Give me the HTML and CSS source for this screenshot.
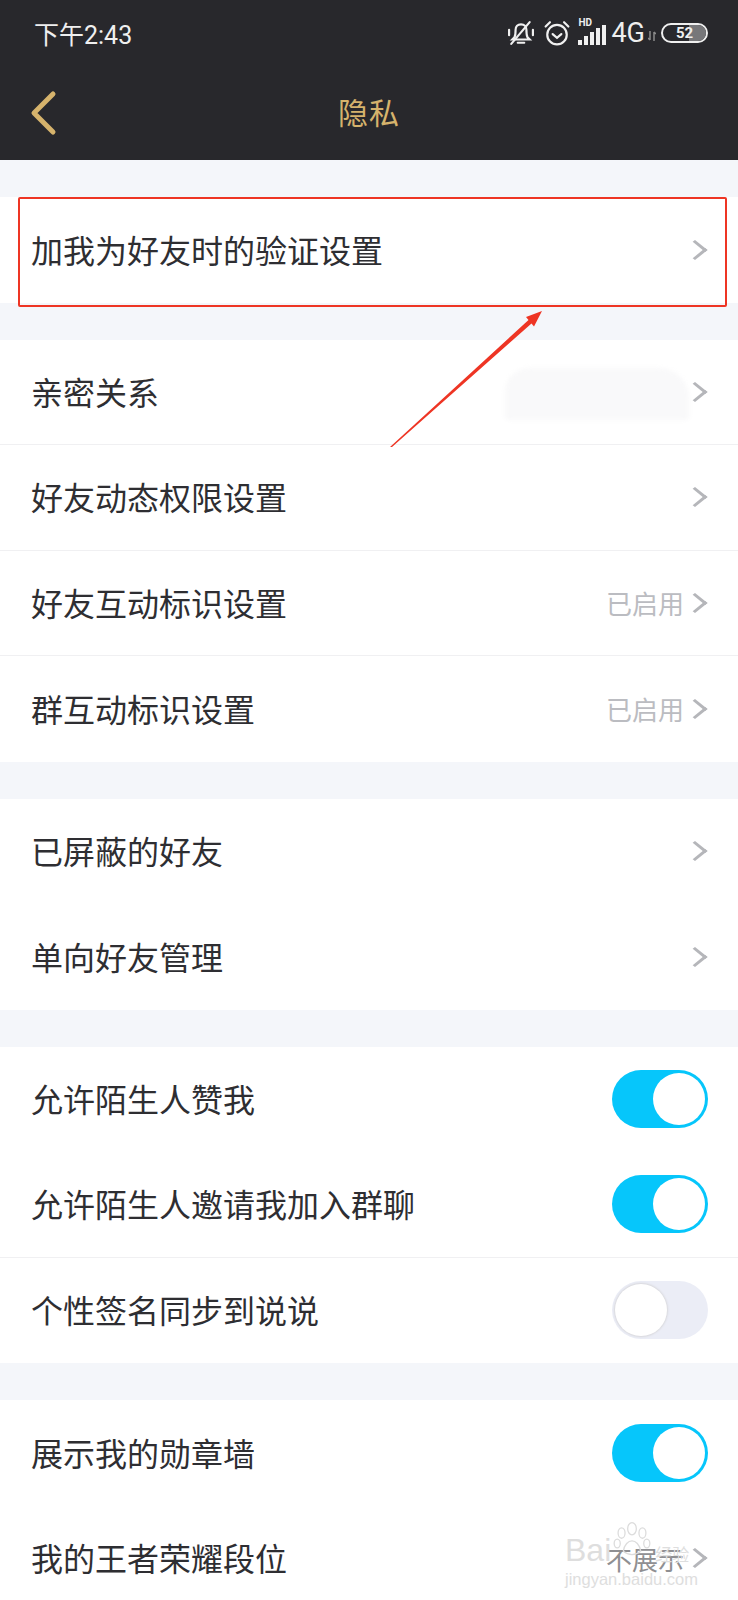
FILE: index.html
```html
<!DOCTYPE html>
<html lang="zh-CN">
<head>
    <meta charset="UTF-8">
    <meta name="viewport" content="width=device-width, initial-scale=1.0">
    <title>隐私</title>
    <link rel="stylesheet" href="styles.css">
</head>
<body>
    <div class="page">
        <header class="top">
            <div class="status-bar">
                <span class="time">下午2:43</span>
                <div class="status-icons">
                    <svg class="ic-bell" width="26" height="26" viewBox="0 0 24 24" fill="none" stroke="#f0f0f0" stroke-width="2">
                        <path d="M6 16c1-2 1-4 1-7 0-3 2-5 5-5s5 2 5 5c0 3 0 5 1 7l2 2H4z"/>
                        <path d="M9 21h6M3 22L20 2M1 9v5M23 9v5" stroke-linecap="round"/>
                    </svg>
                    <svg class="ic-alarm" width="26" height="26" viewBox="0 0 24 24" fill="none" stroke="#f0f0f0" stroke-width="2">
                        <circle cx="12" cy="13.5" r="9"/>
                        <path d="M8 13l4 3.5 4-3.5M1.5 6l4-4M22.5 6l-4-4" stroke-linecap="round"/>
                    </svg>
                    <div class="signal">
                        <span class="hd">HD</span>
                        <svg width="28" height="20" viewBox="0 0 28 20" fill="#f0f0f0">
                            <rect x="0" y="15" width="4" height="5"/>
                            <rect x="6" y="11" width="4" height="9"/>
                            <rect x="12" y="7" width="4" height="13"/>
                            <rect x="18" y="3" width="4" height="17"/>
                            <rect x="24" y="0" width="4" height="20"/>
                        </svg>
                    </div>
                    <span class="net">4G</span>
                    <svg class="ic-data" width="8" height="10" viewBox="0 0 8 10" fill="none" stroke="#8a8a8a" stroke-width="1.5">
                        <path d="M2 0v9M0 7l2 2M6 10V1M8 3L6 1"/>
                    </svg>
                    <div class="battery"><span class="battery-fill"></span><span class="battery-num">52</span></div>
                </div>
            </div>
            <div class="nav-bar">
                <svg class="back" width="28" height="46" viewBox="0 0 28 46" fill="none" stroke="#d6b36c" stroke-width="5" stroke-linecap="round" stroke-linejoin="round">
                    <path d="M24 4L5 23l19 19"/>
                </svg>
                <h1 class="title">隐私</h1>
            </div>
        </header>

        <section class="group">
            <div class="row"><span class="label">加我为好友时的验证设置</span><span class="chev"></span></div>
        </section>

        <section class="group">
            <div class="row line">
                <span class="label">亲密关系</span>
                <span class="smudge"></span>
                <span class="chev"></span>
            </div>
            <div class="row line"><span class="label">好友动态权限设置</span><span class="chev"></span></div>
            <div class="row line"><span class="label">好友互动标识设置</span><span class="value">已启用</span><span class="chev"></span></div>
            <div class="row"><span class="label">群互动标识设置</span><span class="value">已启用</span><span class="chev"></span></div>
        </section>

        <section class="group">
            <div class="row"><span class="label">已屏蔽的好友</span><span class="chev"></span></div>
            <div class="row"><span class="label">单向好友管理</span><span class="chev"></span></div>
        </section>

        <section class="group">
            <div class="row"><span class="label">允许陌生人赞我</span><span class="switch on"></span></div>
            <div class="row line"><span class="label">允许陌生人邀请我加入群聊</span><span class="switch on"></span></div>
            <div class="row"><span class="label">个性签名同步到说说</span><span class="switch"></span></div>
        </section>

        <section class="group">
            <div class="row"><span class="label">展示我的勋章墙</span><span class="switch on"></span></div>
            <div class="row"><span class="label">我的王者荣耀段位</span><span class="value dark">不展示</span><span class="chev"></span></div>
        </section>

        <!-- annotations on top of the screenshot -->
        <div class="red-box"></div>
        <svg class="arrow" width="170" height="150" viewBox="0 0 170 150">
            <path d="M0 142L2 142 141.500 18.500 144 21.500 152 6 136 12 138.500 15z" fill="#ee3524"/>
        </svg>
        <div class="watermark">
            <svg class="paw" width="40" height="40" viewBox="0 0 46 46" fill="none" stroke="#dcdcdc" stroke-width="1.5">
                <ellipse cx="23" cy="10" rx="5" ry="7"/>
                <ellipse cx="11" cy="15" rx="4" ry="6"/>
                <ellipse cx="35" cy="15" rx="4" ry="6"/>
                <ellipse cx="6" cy="27" rx="3.5" ry="5"/>
                <ellipse cx="40" cy="27" rx="3.5" ry="5"/>
                <path d="M13 36c1-8 6-12 10-12s9 4 10 12c-6 5-14 5-20 0z"/>
            </svg>
            <div class="wm-main">Bai<span class="wm-cn">经验</span></div>
            <div class="wm-sub">jingyan.baidu.com</div>
        </div>
    </div>
</body>
</html>
```

FILE: styles.css
```css
html, body {
    margin: 0;
    padding: 0;
}
body {
    font-family: "Noto Sans CJK SC", "Noto Sans", sans-serif;
    background: #f4f6fa;
}
.page {
    position: relative;
    width: 738px;
    height: 1600px;
    overflow: hidden;
}
.top {
    height: 160px;
    background: #28282c;
}
.status-bar {
    display: flex;
    justify-content: space-between;
    align-items: center;
    height: 65px;
    padding: 0 30px 0 34px;
    color: #efefef;
}
.time {
    font-family: Roboto, "Noto Sans CJK SC", sans-serif;
    font-size: 25px;
}
.status-icons {
    display: flex;
    align-items: center;
}
.ic-bell {
    margin-right: 10px;
}
.ic-alarm {
    margin-right: 8px;
}
.signal {
    position: relative;
    width: 28px;
    height: 24px;
    display: flex;
    align-items: flex-end;
}
.hd {
    position: absolute;
    top: -3px;
    left: 0;
    font-family: Roboto, sans-serif;
    font-size: 10px;
    font-weight: 700;
    line-height: 10px;
}
.net {
    font-family: Roboto, sans-serif;
    font-size: 27px;
    margin-left: 5px;
}
.ic-data {
    margin: 6px 5px 0 3px;
}
.battery {
    position: relative;
    box-sizing: border-box;
    width: 47px;
    height: 20px;
    border: 2px solid #efefef;
    border-radius: 10px;
    overflow: hidden;
    text-align: center;
}
.battery-fill {
    position: absolute;
    top: 0;
    bottom: 0;
    right: 0;
    width: 17px;
    background: #77777a;
}
.battery-num {
    position: relative;
    font-family: Roboto, sans-serif;
    font-size: 15px;
    font-weight: 700;
    line-height: 16px;
    display: block;
}
.nav-bar {
    position: relative;
    height: 95px;
    padding-bottom: 4px;
    box-sizing: border-box;
    display: flex;
    align-items: center;
    justify-content: center;
}
.back {
    position: absolute;
    left: 29px;
    top: 25px;
}
.title {
    margin: 0;
    font-size: 30px;
    font-weight: 400;
    letter-spacing: 1px;
    color: #d6b36c;
}
.group {
    margin-top: 37px;
    background: #fff;
}
.row {
    box-sizing: border-box;
    display: flex;
    align-items: center;
    height: 105.5px;
    padding: 0 30px 0 31px;
}
.line {
    border-bottom: 1px solid #f0f0f2;
}
.label {
    flex: 1;
    padding-bottom: 2px;
    font-size: 32px;
    color: #2e2e32;
    white-space: nowrap;
}
.value {
    font-size: 26px;
    color: #bbbcc1;
    margin-right: 7px;
}
.value.dark {
    color: #8f8f92;
}
.chev {
    width: 13px;
    height: 13px;
    margin-right: 5px;
    margin-left: -4px;
    border-top: 3px solid #b5b6ba;
    border-right: 3px solid #b5b6ba;
    transform: rotate(45deg) skew(-6deg, -6deg);
}
.smudge {
    width: 184px;
    height: 52px;
    margin: 4px 2px 0 0;
    background: #f9f9fa;
    border-radius: 24px 30px 4px 4px;
    filter: blur(2px);
}
.switch {
    position: relative;
    box-sizing: border-box;
    width: 96px;
    height: 58px;
    border-radius: 29px;
    background: #ebedf6;
}
.switch::after {
    content: "";
    position: absolute;
    top: 3px;
    left: 3px;
    width: 52px;
    height: 52px;
    border-radius: 50%;
    background: #fff;
    box-shadow: 0 0 2px 1px #d8d8dc;
}
.switch.on {
    background: #06c6fb;
}
.switch.on::after {
    left: 41px;
    box-shadow: none;
}
.red-box {
    position: absolute;
    left: 18px;
    top: 197px;
    box-sizing: border-box;
    width: 709px;
    height: 110px;
    border: 2px solid #ee3524;
    border-radius: 2px;
}
.arrow {
    position: absolute;
    left: 390px;
    top: 305px;
}
.watermark {
    position: absolute;
    left: 565px;
    top: 1518px;
    width: 135px;
    color: #dedede;
}
.paw {
    position: absolute;
    left: 47px;
    top: 2px;
}
.wm-main {
    position: relative;
    margin-top: 16px;
    font-family: "Liberation Sans", sans-serif;
    font-size: 32px;
    line-height: 32px;
    white-space: nowrap;
}
.wm-cn {
    font-family: "Noto Sans CJK SC", sans-serif;
    font-size: 17px;
    margin-left: 44px;
}
.wm-sub {
    position: relative;
    font-family: "Liberation Sans", sans-serif;
    font-size: 16.5px;
    line-height: 18px;
    white-space: nowrap;
}
```
